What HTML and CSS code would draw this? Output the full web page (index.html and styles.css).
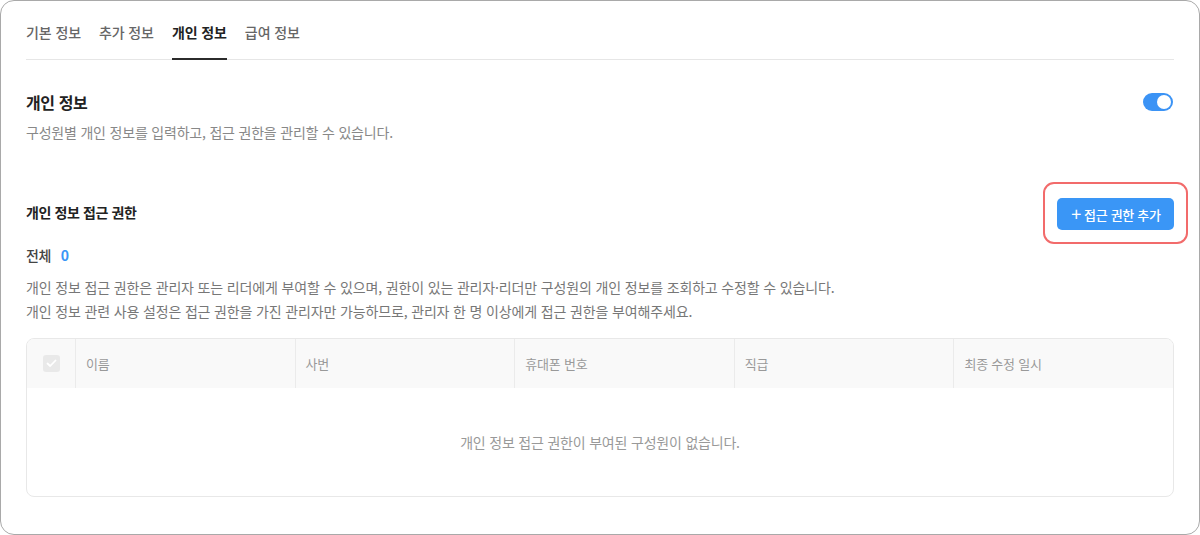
FILE: index.html
```html
<!DOCTYPE html>
<html lang="ko">
<head>
<meta charset="utf-8">
<link rel="stylesheet" href="styles.css">
</head>
<body>
<div class="frame">
  <nav class="tabs">
    <span class="tab">기본 정보</span>
    <span class="tab">추가 정보</span>
    <span class="tab active">개인 정보</span>
    <span class="tab">급여 정보</span>
  </nav>

  <section class="intro">
    <div class="intro-head">
      <h2 class="title">개인 정보</h2>
      <span class="toggle"><span class="knob"></span></span>
    </div>
    <p class="desc">구성원별 개인 정보를 입력하고, 접근 권한을 관리할 수 있습니다.</p>
  </section>

  <section class="access">
    <div class="access-head">
      <h3 class="subtitle">개인 정보 접근 권한</h3>
      <button class="add-btn"><span class="plus">+</span>접근 권한 추가</button>
    </div>
    <div class="total">전체 <span class="count">0</span></div>
    <p class="note">개인 정보 접근 권한은 관리자 또는 리더에게 부여할 수 있으며, 권한이 있는 관리자·리더만 구성원의 개인 정보를 조회하고 수정할 수 있습니다.<br>개인 정보 관련 사용 설정은 접근 권한을 가진 관리자만 가능하므로, 관리자 한 명 이상에게 접근 권한을 부여해주세요.</p>

    <div class="table">
      <div class="thead">
        <div class="th th-check"><span class="checkbox"><svg width="11" height="9" viewBox="0 0 11 9"><path d="M1.5 4.5 L4.2 7 L9.5 1.5" fill="none" stroke="#fff" stroke-width="1.8" stroke-linecap="round" stroke-linejoin="round"/></svg></span></div>
        <div class="th">이름</div>
        <div class="th">사번</div>
        <div class="th">휴대폰 번호</div>
        <div class="th">직급</div>
        <div class="th">최종 수정 일시</div>
      </div>
      <div class="empty">개인 정보 접근 권한이 부여된 구성원이 없습니다.</div>
    </div>
  </section>
</div>
</body>
</html>
```
FILE: styles.css
```css
* { box-sizing: border-box; }
html, body { margin: 0; padding: 0; background: #fff; }
body {
  font-family: "Noto Sans CJK KR", "Noto Sans", sans-serif;
  color: #222;
}
.frame {
  width: 1200px;
  height: 535px;
  border: 1px solid #a9a9a9;
  border-radius: 14px;
  padding: 0 25px 0 25px;
  overflow: hidden;
}
.tabs {
  display: flex;
  gap: 18px;
  height: 59px;
  border-bottom: 1px solid #e6e6e6;
  align-items: flex-end;
}
.tab {
  font-size: 14px;
  font-weight: 500;
  color: #666;
  letter-spacing: -0.1px;
  padding-bottom: 16px;
  line-height: 20px;
  border-bottom: 2px solid transparent;
  margin-bottom: -1px;
}
.tab.active {
  color: #222;
  font-weight: 700;
  letter-spacing: -0.1px;
  border-bottom-color: #2b2b2b;
}
.intro { padding-top: 31px; }
.intro-head {
  display: flex;
  justify-content: space-between;
  align-items: center;
  padding-right: 1px;
}
.title {
  margin: 0;
  font-size: 16px;
  font-weight: 700;
  line-height: 22px;
  letter-spacing: -0.4px;
  color: #222;
}
.toggle {
  width: 30px;
  height: 18px;
  border-radius: 9px;
  background: #3b93f5;
  display: flex;
  align-items: center;
  justify-content: flex-end;
  padding-right: 2px;
}
.knob {
  width: 14px;
  height: 14px;
  border-radius: 50%;
  background: #fff;
}
.desc {
  margin: 9px 0 0;
  font-size: 14px;
  line-height: 20px;
  color: #888;
  letter-spacing: -0.2px;
}
.access { padding-top: 56px; }
.access-head {
  display: flex;
  justify-content: space-between;
  align-items: center;
}
.subtitle {
  margin: 0 0 4px;
  font-size: 14px;
  font-weight: 700;
  line-height: 20px;
  letter-spacing: -0.4px;
  color: #222;
}
.add-btn {
  position: relative;
  height: 32px;
  width: 117px;
  border: none;
  border-radius: 5px;
  background: #3a96f6;
  color: #fff;
  font-family: inherit;
  font-size: 13px;
  font-weight: 500;
  letter-spacing: -0.3px;
  display: flex;
  align-items: center;
  justify-content: center;
  gap: 3px;
  padding: 0 0 0 1px;
}
.add-btn::after {
  content: "";
  position: absolute;
  left: -14px;
  top: -16px;
  right: -14px;
  bottom: -14px;
  border: 2px solid #f26b6b;
  border-radius: 11px;
}
.plus { font-size: 18px; font-weight: 400; line-height: 1; margin-top: -2px; }
.total {
  margin-top: 15px;
  font-size: 14px;
  font-weight: 500;
  color: #444;
  line-height: 20px;
  letter-spacing: -0.3px;
}
.count { color: #3a96f6; font-weight: 700; margin-left: 6px; }
.note {
  margin: 10px 0 0;
  font-size: 14px;
  line-height: 24px;
  color: #777;
  letter-spacing: -0.15px;
}
.table {
  margin-top: 15px;
  border: 1px solid #e8e8e8;
  border-radius: 8px;
  overflow: hidden;
}
.thead {
  display: grid;
  grid-template-columns: 48px repeat(5, 1fr);
  height: 49px;
  background: #f9f9f9;
}
.th {
  display: flex;
  align-items: center;
  padding-left: 10px;
  font-size: 13px;
  color: #999;
  letter-spacing: -0.2px;
  border-left: 1px solid #ebebeb;
}
.th-check {
  border-left: none;
  justify-content: center;
  padding-left: 0;
}
.checkbox {
  width: 17px;
  height: 17px;
  border-radius: 3px;
  background: #e9e9e9;
  display: flex;
  align-items: center;
  justify-content: center;
}
.empty {
  height: 108px;
  display: flex;
  align-items: center;
  justify-content: center;
  font-size: 14px;
  color: #999;
  letter-spacing: -0.2px;
}
```
